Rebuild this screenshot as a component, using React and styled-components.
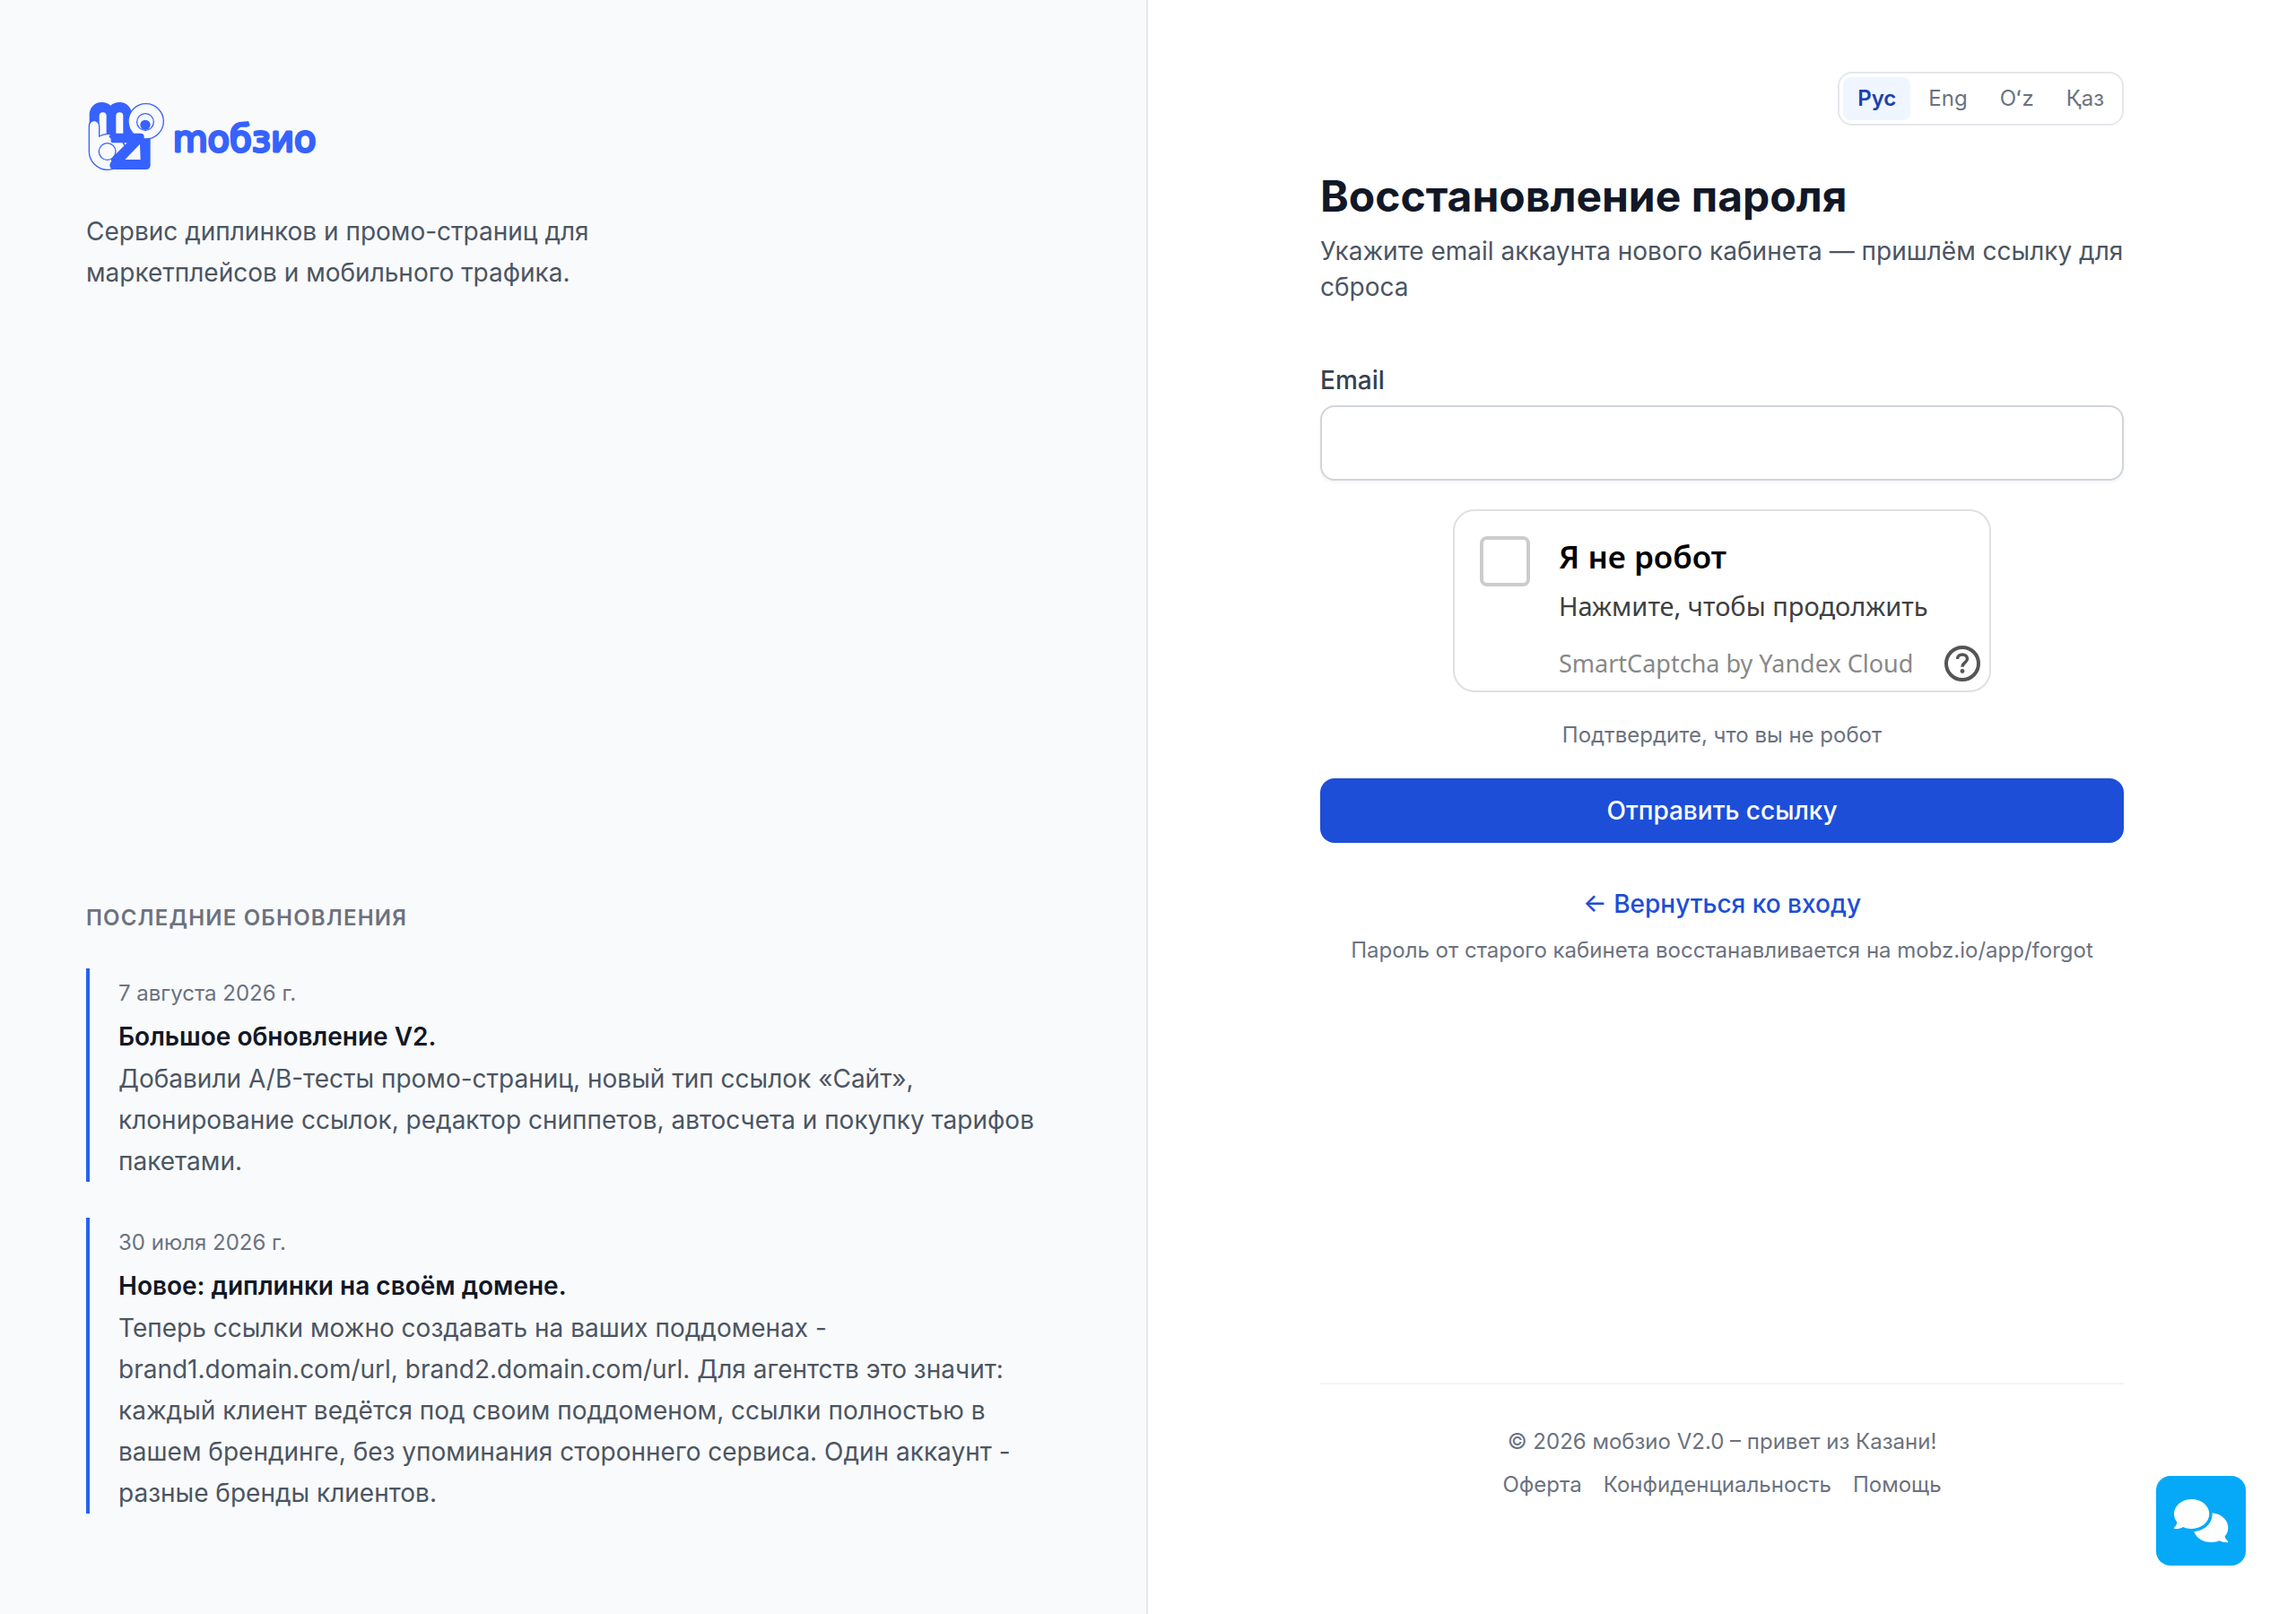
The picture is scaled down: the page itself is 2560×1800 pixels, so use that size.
import React, { useState } from 'react';
import styled, { createGlobalStyle } from 'styled-components';

const GlobalStyle = createGlobalStyle`
  *, *::before, *::after {
    box-sizing: border-box;
  }
  body {
    margin: 0;
    background: #ffffff;
    color: #111827;
    font-family: Inter, 'Liberation Sans', sans-serif;
    font-size: 28px;
    line-height: 40px;
    -webkit-font-smoothing: antialiased;
  }
  h1, h2, h3, p, ul {
    margin: 0;
    padding: 0;
  }
  button, input {
    font: inherit;
  }
`;

const Page = styled.div`
  display: grid;
  grid-template-columns: 1fr 1fr;
  min-height: 100vh;
`;

const Aside = styled.aside`
  display: flex;
  flex-direction: column;
  justify-content: space-between;
  padding: 112px 96px;
  background: #f9fafb;
  border-right: 2px solid #e5e7eb;
`;

const Brand = styled.div`
  display: flex;
  flex-direction: column;
  gap: 43px;
`;

const LogoLink = styled.a`
  align-self: flex-start;
  svg {
    display: block;
  }
`;

const Tagline = styled.p`
  max-width: 640px;
  line-height: 46px;
  color: #4b5563;
`;

const UpdatesTitle = styled.h2`
  margin-bottom: 40px;
  font-size: 24px;
  line-height: 32px;
  font-weight: 600;
  letter-spacing: 0.05em;
  text-transform: uppercase;
  color: #6b7280;
`;

const UpdateList = styled.ul`
  display: flex;
  flex-direction: column;
  gap: 40px;
  list-style: none;
`;

const Update = styled.li`
  padding: 8px 0 0 32px;
  border-left: 4px solid #2563eb;
`;

const UpdateDate = styled.time`
  display: block;
  margin-bottom: 6px;
  font-size: 24px;
  line-height: 40px;
  color: #6b7280;
`;

const UpdateName = styled.h3`
  && {
    margin-bottom: 2px;
  }
  font-size: 28px;
  line-height: 44px;
  font-weight: 600;
`;

const UpdateText = styled.p`
  line-height: 46px;
  color: #4b5563;
`;

const Main = styled.main`
  display: flex;
  flex-direction: column;
  width: 100%;
  max-width: 1024px;
  margin: 0 auto;
  padding: 80px 64px 128px;
`;

const LangSwitch = styled.div`
  display: flex;
  gap: 4px;
  align-self: flex-end;
  padding: 4px;
  border: 2px solid #e5e7eb;
  border-radius: 16px;
`;

const LangButton = styled.button`
  padding: 8px 16px;
  border: 0;
  border-radius: 8px;
  background: ${({ $active }) => ($active ? '#eff6ff' : 'transparent')};
  color: ${({ $active }) => ($active ? '#1e40af' : '#6b7280')};
  font-size: 24px;
  line-height: 32px;
  font-weight: ${({ $active }) => ($active ? 600 : 400)};
  cursor: pointer;
`;

const Title = styled.h1`
  margin-top: 48px;
  font-size: 48px;
  line-height: 62px;
  font-weight: 700;
`;

const Subtitle = styled.p`
  margin-top: 10px;
  color: #4b5563;
`;

const Form = styled.form`
  display: flex;
  flex-direction: column;
  gap: 32px;
  margin-top: 64px;
`;

const Field = styled.div`
  display: flex;
  flex-direction: column;
  gap: 8px;
`;

const Label = styled.label`
  font-weight: 500;
  color: #374151;
`;

const Input = styled.input`
  width: 100%;
  height: 84px;
  padding: 0 24px;
  border: 2px solid #d1d5db;
  border-radius: 16px;
  background: #ffffff;
  box-shadow: 0 2px 4px rgba(0, 0, 0, 0.05);
  outline: none;
  &:focus {
    border-color: #2563eb;
  }
`;

const Captcha = styled.div`
  display: flex;
  align-self: center;
  gap: 32px;
  width: 600px;
  max-width: 100%;
  height: 204px;
  padding: 28px 10px 10px 28px;
  border: 2px solid #e0e0e0;
  border-radius: 24px;
  font-family: 'Noto Sans', 'Open Sans', sans-serif;
`;

const CaptchaCheck = styled.input`
  appearance: none;
  flex: none;
  width: 56px;
  height: 56px;
  margin: 0;
  border: 4px solid #cccccc;
  border-radius: 8px;
  background: #ffffff;
  cursor: pointer;
  &:checked {
    background: #5282ff;
    border-color: #5282ff;
  }
`;

const CaptchaBody = styled.div`
  display: flex;
  flex: 1;
  flex-direction: column;
  justify-content: space-between;
`;

const CaptchaLabel = styled.label`
  display: flex;
  flex-direction: column;
  gap: 14px;
  cursor: pointer;
`;

const CaptchaTitle = styled.span`
  font-size: 35px;
  line-height: 46px;
  font-weight: 600;
  color: #000000;
`;

const CaptchaText = styled.span`
  font-size: 29px;
  line-height: 36px;
  color: #404040;
`;

const CaptchaFoot = styled.div`
  display: flex;
  align-items: center;
  justify-content: space-between;
  font-size: 27px;
  color: #888888;
`;

const HelpButton = styled.button`
  padding: 0;
  border: 0;
  background: none;
  cursor: pointer;
  svg {
    display: block;
  }
`;

const Note = styled.p`
  font-size: 24px;
  line-height: 32px;
  text-align: center;
  color: #6b7280;
`;

const Submit = styled.button`
  width: 100%;
  padding: 16px 32px;
  border: 0;
  border-radius: 16px;
  background: #1d4ed8;
  color: #ffffff;
  font-weight: 500;
  cursor: pointer;
`;

const Back = styled.div`
  display: flex;
  flex-direction: column;
  align-items: center;
  gap: 16px;
  margin-top: 48px;
`;

const BackLink = styled.a`
  font-weight: 500;
  color: #1d4ed8;
  text-decoration: none;
`;

const Footer = styled.footer`
  display: flex;
  flex-direction: column;
  gap: 16px;
  margin-top: auto;
  padding-top: 48px;
  border-top: 2px solid #f3f4f6;
`;

const FooterLinks = styled.nav`
  display: flex;
  justify-content: center;
  gap: 24px;
  font-size: 24px;
  line-height: 32px;
`;

const MutedLink = styled.a`
  color: #6b7280;
  text-decoration: none;
`;

const ChatButton = styled.button`
  position: fixed;
  right: 56px;
  bottom: 54px;
  display: flex;
  align-items: center;
  justify-content: center;
  width: 100px;
  height: 100px;
  padding: 0;
  border: 0;
  border-radius: 16px;
  background: #05a9f8;
  cursor: pointer;
`;

const languages = ['Рус', 'Eng', 'Oʻz', 'Қаз'];

const updates = [
  {
    date: '7 августа 2026 г.',
    dateTime: '2026-08-07',
    name: 'Большое обновление V2.',
    text: 'Добавили A/B-тесты промо-страниц, новый тип ссылок «Сайт», клонирование ссылок, редактор сниппетов, автосчета и покупку тарифов пакетами.',
  },
  {
    date: '30 июля 2026 г.',
    dateTime: '2026-07-30',
    name: 'Новое: диплинки на своём домене.',
    text: 'Теперь ссылки можно создавать на ваших поддоменах - brand1.domain.com/url, brand2.domain.com/url. Для агентств это значит: каждый клиент ведётся под своим поддоменом, ссылки полностью в вашем брендинге, без упоминания стороннего сервиса. Один аккаунт - разные бренды клиентов.',
  },
];

const Logo = () => (
  <svg width="268" height="80" viewBox="48 66 804 240" role="img" aria-label="мобзио">
    <path
      fill="#3662ff"
      d="M59 200V114C59 90 77 72 100 72c12 0 22 4 30 11 8-7 18-11 30-11 23 0 41 18 41 42v72H59z"
    />
    <path fill="#f9fafb" d="M92 200v-82a12 12 0 0 1 24 0v82zM148 177v-59a12 12 0 0 1 24 0v59z" />
    <path
      fill="#f9fafb"
      stroke="#3662ff"
      strokeWidth="4"
      d="M58 151a17 17 0 0 1 34 0v35c9-5 18-8 28-8 33 0 60 26 60 60s-27 60-60 60c-34 0-62-28-62-62z"
    />
    <circle cx="119" cy="237" r="28" fill="none" stroke="#3662ff" strokeWidth="4" />
    <circle cx="248" cy="136" r="59" fill="#f9fafb" stroke="#3662ff" strokeWidth="4" />
    <circle cx="246" cy="138" r="28" fill="#f9fafb" stroke="#3662ff" strokeWidth="4" />
    <circle cx="246" cy="148" r="17" fill="#3662ff" />
    <path
      fill="#3662ff"
      fillRule="evenodd"
      d="M132 176h98q12 0 12 12v7h21v87q0 15-15 15h-104q-17 0-17-15 0-7 6-12-4-6 1-11l51-51h-45q-12 0-9-11 1-6-6-8 0-8 7-13zM228 212l-50 52h52z"
    />
    <path fill="none" stroke="#3662ff" strokeWidth="3" d="M173 206l6 16" />
    <text
      x="338"
      y="236"
      fill="#3662ff"
      stroke="#3662ff"
      strokeWidth="9"
      strokeLinejoin="round"
      fontFamily="'DejaVu Sans', sans-serif"
      fontSize="120"
    >
      mобзио
    </text>
  </svg>
);

const HelpIcon = () => (
  <svg width="40" height="40" viewBox="0 0 40 40" fill="none" stroke="#555555" strokeWidth="4">
    <circle cx="20" cy="20" r="18" />
    <path d="M14.5 15c0-3 2.400-5 5.500-5s5.500 2 5.500 4.800c0 4-5.500 4.200-5.500 9" strokeWidth="3.500" />
    <circle cx="20" cy="28.500" r="2.400" fill="#555555" stroke="none" />
  </svg>
);

const ChatIcon = () => (
  <svg width="62" height="50" viewBox="0 0 186 150" fill="#ffffff" aria-hidden="true">
    <path d="M62 3c33 0 59 22 59 49s-26 50-59 50c-11 0-21-2-29-6-8 5-18 7-28 6-2 0-3-3-1-5 5-4 8-10 9-17C7 72 3 62 3 52 3 25 29 3 62 3z" />
    <path d="M131 49c31 3 53 24 53 49 0 11-4 21-11 29 1 7 5 12 10 16 2 2 1 5-2 5-10 0-19-2-26-6-8 3-17 5-27 5-28 0-51-14-58-36 36-2 63-28 61-62z" />
  </svg>
);

const UpdateItem = ({ date, dateTime, name, text }) => (
  <Update>
    <UpdateDate dateTime={dateTime}>{date}</UpdateDate>
    <UpdateName>{name}</UpdateName>
    <UpdateText>{text}</UpdateText>
  </Update>
);

const App = () => {
  const [lang, setLang] = useState('Рус');
  const [email, setEmail] = useState('');

  return (
    <>
      <GlobalStyle />
      <Page>
        <Aside>
          <Brand>
            <LogoLink href="#">
              <Logo />
            </LogoLink>
            <Tagline>Сервис диплинков и промо-страниц для маркетплейсов и мобильного трафика.</Tagline>
          </Brand>
          <section>
            <UpdatesTitle>Последние обновления</UpdatesTitle>
            <UpdateList>
              {updates.map((item) => (
                <UpdateItem key={item.dateTime} {...item} />
              ))}
            </UpdateList>
          </section>
        </Aside>

        <Main>
          <LangSwitch>
            {languages.map((item) => (
              <LangButton
                key={item}
                type="button"
                $active={item === lang}
                onClick={() => setLang(item)}
              >
                {item}
              </LangButton>
            ))}
          </LangSwitch>
          <Title>Восстановление пароля</Title>
          <Subtitle>Укажите email аккаунта нового кабинета — пришлём ссылку для сброса</Subtitle>

          <Form onSubmit={(e) => e.preventDefault()}>
            <Field>
              <Label htmlFor="email">Email</Label>
              <Input
                id="email"
                type="email"
                value={email}
                onChange={(e) => setEmail(e.target.value)}
              />
            </Field>
            <Captcha>
              <CaptchaCheck id="captcha" type="checkbox" />
              <CaptchaBody>
                <CaptchaLabel htmlFor="captcha">
                  <CaptchaTitle>Я не робот</CaptchaTitle>
                  <CaptchaText>Нажмите, чтобы продолжить</CaptchaText>
                </CaptchaLabel>
                <CaptchaFoot>
                  <span>SmartCaptcha by Yandex Cloud</span>
                  <HelpButton type="button" aria-label="Справка">
                    <HelpIcon />
                  </HelpButton>
                </CaptchaFoot>
              </CaptchaBody>
            </Captcha>
            <Note>Подтвердите, что вы не робот</Note>
            <Submit type="submit">Отправить ссылку</Submit>
          </Form>

          <Back>
            <BackLink href="#">← Вернуться ко входу</BackLink>
            <Note>
              Пароль от старого кабинета восстанавливается на{' '}
              <MutedLink href="#">mobz.io/app/forgot</MutedLink>
            </Note>
          </Back>

          <Footer>
            <Note>© 2026 мобзио V2.0 – привет из Казани!</Note>
            <FooterLinks>
              <MutedLink href="#">Оферта</MutedLink>
              <MutedLink href="#">Конфиденциальность</MutedLink>
              <MutedLink href="#">Помощь</MutedLink>
            </FooterLinks>
          </Footer>
        </Main>
      </Page>
      <ChatButton type="button" aria-label="Чат">
        <ChatIcon />
      </ChatButton>
    </>
  );
};

export default App;
